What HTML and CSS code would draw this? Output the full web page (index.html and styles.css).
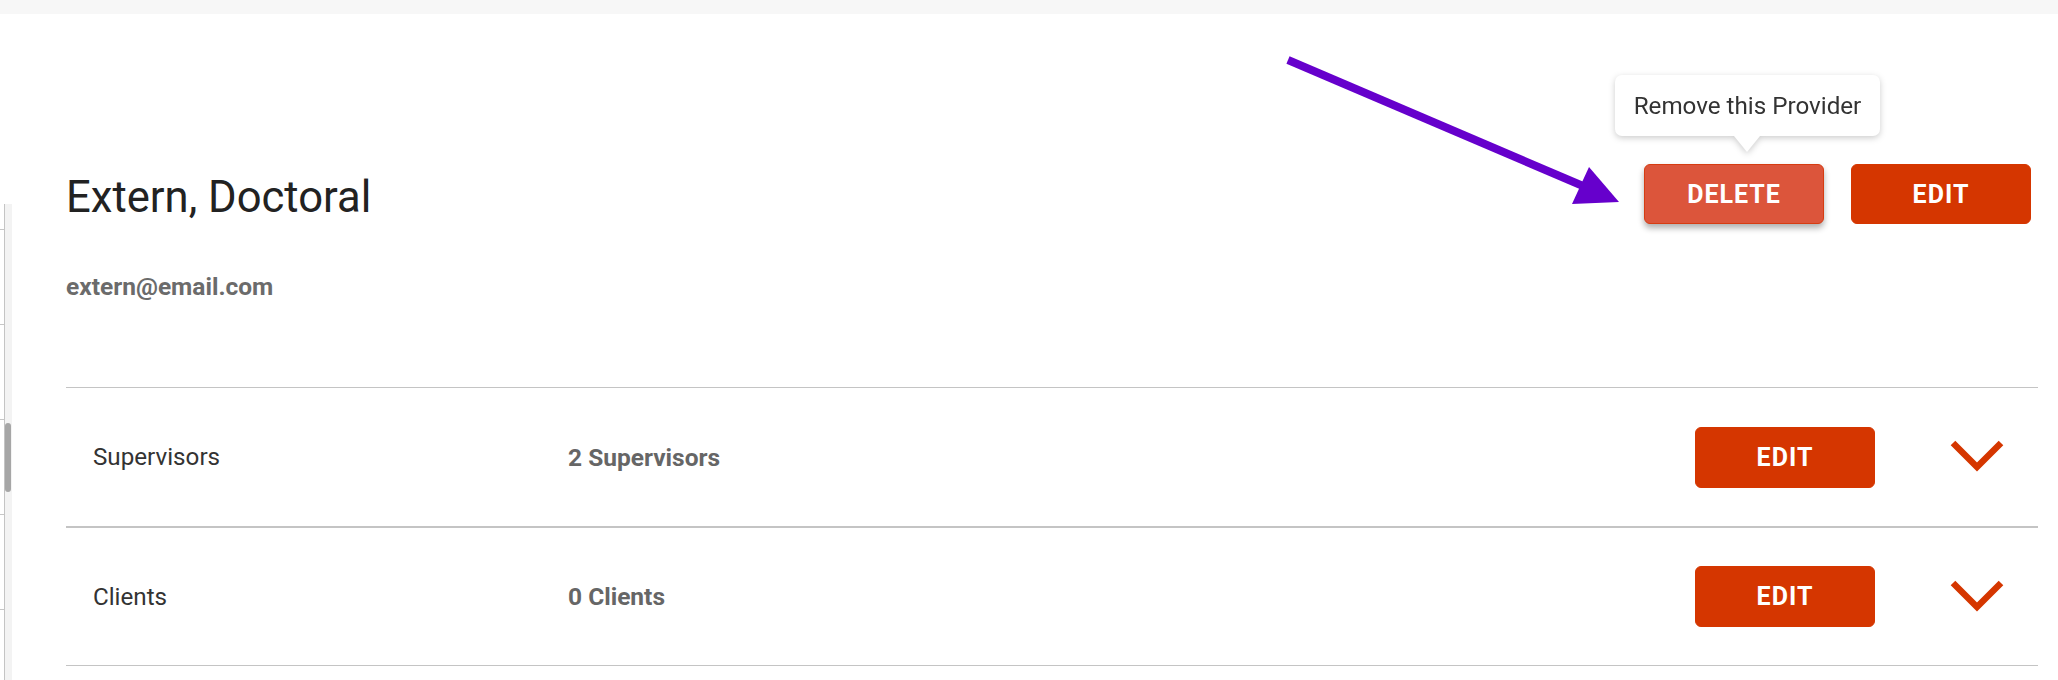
FILE: index.html
```html
<!DOCTYPE html>
<html lang="en">
<head>
<meta charset="utf-8">
<title>Provider</title>
<link rel="stylesheet" href="styles.css">
</head>
<body>
  <div class="topbar"></div>
  <div class="layout">
    <aside class="rail">
      <div class="rail-ticks">
        <span class="tick"></span>
        <span class="tick"></span>
        <span class="tick"></span>
        <span class="tick"></span>
        <span class="tick"></span>
      </div>
      <div class="rail-track">
        <div class="rail-thumb"></div>
      </div>
    </aside>
    <main class="content">
      <header class="profile-head">
        <h1 class="profile-name">Extern, Doctoral</h1>
        <div class="head-actions">
          <div class="tip-anchor">
            <div class="tooltip">Remove this Provider<span class="tooltip-tail"></span></div>
            <button class="btn btn-hover" type="button">DELETE</button>
          </div>
          <button class="btn" type="button">EDIT</button>
        </div>
      </header>
      <p class="profile-email">extern@email.com</p>
      <section class="rows">
        <div class="row">
          <span class="row-label">Supervisors</span>
          <span class="row-count">2 Supervisors</span>
          <button class="btn btn-row" type="button">EDIT</button>
          <svg class="chevron" width="54" height="34" viewBox="0 0 54 34" aria-hidden="true"><polyline points="3,3 27,27 51,3" fill="none" stroke="#d53600" stroke-width="6.5"/></svg>
        </div>
        <div class="row row-thick">
          <span class="row-label">Clients</span>
          <span class="row-count">0 Clients</span>
          <button class="btn btn-row" type="button">EDIT</button>
          <svg class="chevron" width="54" height="34" viewBox="0 0 54 34" aria-hidden="true"><polyline points="3,3 27,27 51,3" fill="none" stroke="#d53600" stroke-width="6.5"/></svg>
        </div>
      </section>
    </main>
  </div>
  <svg class="annotation" width="345" height="160" viewBox="0 0 345 160" aria-hidden="true">
    <line x1="8" y1="10" x2="303" y2="136" stroke="#6600cc" stroke-width="8"/>
    <polygon points="309,117 292,154 339,152" fill="#6600cc"/>
  </svg>
</body>
</html>
```

FILE: styles.css
```css
* { box-sizing: border-box; }

html, body {
  margin: 0;
  padding: 0;
  background: #ffffff;
  font-family: Roboto, "Liberation Sans", sans-serif;
  overflow: hidden;
}

body {
  width: 2058px;
  height: 680px;
  position: relative;
}

.topbar {
  height: 14px;
  background: #f7f7f7;
}

.layout {
  display: flex;
  height: 666px;
}

.rail {
  width: 12px;
  margin-top: 190px;
  display: flex;
  flex-shrink: 0;
}

.rail-ticks {
  width: 4px;
  display: flex;
  flex-direction: column;
  padding-top: 25px;
  gap: 94px;
}

.tick {
  display: block;
  height: 1px;
  background: #c6c6c6;
}

.rail-track {
  width: 8px;
  border-left: 1px solid #c4c4c4;
  background: #f3f3f3;
  padding-top: 219px;
  padding-left: 0;
}

.rail-thumb {
  width: 6px;
  height: 69px;
  border-radius: 3px;
  background: #a6a6a6;
}

.content {
  flex: 1;
  padding-left: 54px;
  padding-right: 20px;
}

.profile-head {
  display: flex;
  align-items: center;
  margin-top: 150px;
  height: 60px;
}

.profile-name {
  margin: 7px 0 0 0;
  font-size: 43.6px;
  font-weight: 400;
  color: #222222;
  line-height: normal;
}

.head-actions {
  margin-left: auto;
  margin-right: 7px;
  display: flex;
  gap: 27px;
}

.tip-anchor {
  position: relative;
}

.btn {
  width: 180px;
  height: 60px;
  border: 1px solid #d53600;
  border-radius: 6px;
  background: #d53600;
  color: #ffffff;
  font-family: Roboto, "Liberation Sans", sans-serif;
  font-size: 25px;
  font-weight: 700;
  letter-spacing: 1px;
  padding: 0;
  cursor: pointer;
}

.btn-hover {
  background: #dc553b;
  border-color: #d63c12;
  box-shadow: 0 4px 6px rgba(0, 0, 0, 0.32);
}

.btn-row {
  height: 61px;
}

.tooltip {
  position: absolute;
  left: -29px;
  bottom: calc(100% + 28px);
  width: 265px;
  height: 61px;
  background: #ffffff;
  border-radius: 7px;
  color: #333333;
  font-size: 24.2px;
  display: flex;
  align-items: center;
  justify-content: center;
  white-space: nowrap;
  filter: drop-shadow(0 2px 3px rgba(0, 0, 0, 0.2));
}

.tooltip-tail {
  position: absolute;
  left: 119px;
  top: 100%;
  width: 0;
  height: 0;
  border-left: 13px solid transparent;
  border-right: 13px solid transparent;
  border-top: 16px solid #ffffff;
}

.profile-email {
  margin: 49px 0 0 0;
  font-size: 24.5px;
  line-height: 28px;
  font-weight: 700;
  color: #6b6b6b;
}

.rows {
  margin-top: 86px;
  border-bottom: 1px solid #c4c4c4;
}

.row {
  display: flex;
  align-items: center;
  height: 139px;
  border-top: 1px solid #c4c4c4;
  padding-left: 27px;
  padding-right: 34px;
}

.row-thick {
  border-top-width: 2px;
}

.row-label {
  width: 475px;
  font-size: 24.2px;
  color: #333333;
}

.row-count {
  flex: 1;
  font-size: 24.5px;
  font-weight: 700;
  color: #666666;
}

.chevron {
  margin-left: 75px;
  display: block;
}

.annotation {
  position: absolute;
  left: 1280px;
  top: 50px;
  pointer-events: none;
}
```
